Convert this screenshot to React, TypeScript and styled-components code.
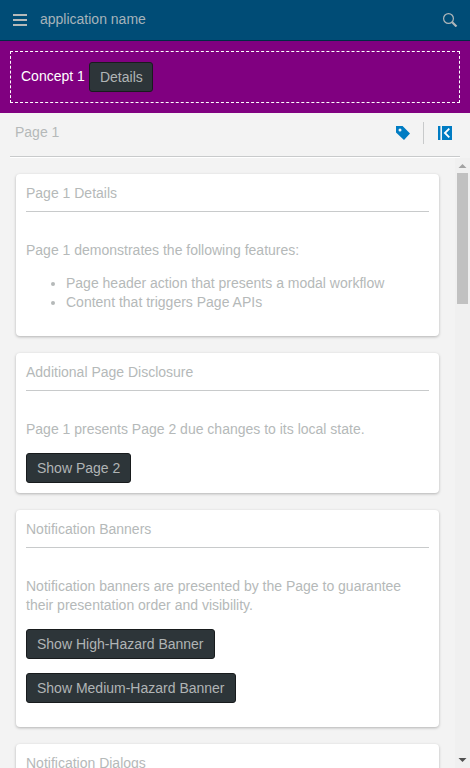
import React from "react";
import styled, { createGlobalStyle } from "styled-components";

const GlobalStyle = createGlobalStyle`
  * { box-sizing: border-box; }
  html, body { margin: 0; height: 100%; overflow: hidden; }
  body {
    font-family: "Liberation Sans", Arial, sans-serif;
    font-size: 14px;
    line-height: 19px;
    color: #b5b9b9;
    background: #f3f3f3;
  }
`;

const Shell = styled.div`
  display: flex;
  flex-direction: column;
  height: 100vh;
  overflow: hidden;
`;

const AppHeader = styled.header`
  display: flex;
  align-items: center;
  flex: 0 0 41px;
  padding: 0 12px 0 13px;
  background: #004c76;
  border-bottom: 1px solid #002b43;
  color: #a6b3ba;
`;

const AppName = styled.div`
  flex: 1;
  margin: 0 0 2px 13px;
`;

const ConceptBanner = styled.section`
  flex: 0 0 72px;
  padding: 10px;
  background: #800080;
`;

const ConceptFrame = styled.div`
  display: flex;
  align-items: flex-start;
  height: 52px;
  padding: 10px;
  gap: 3.89px;
  border: 1px dashed #fff;
  color: #fff;
`;

const ConceptName = styled.span`
  padding-top: 5px;
`;

const Button = styled.button`
  display: block;
  height: 30px;
  padding: 0 10px;
  border: 1px solid #181b1d;
  border-radius: 3px;
  background: #2d3539;
  color: #b0b4b5;
  font: inherit;
  line-height: 28px;
  white-space: nowrap;
`;

const DetailsButton = styled(Button)`
  width: 64.3px;
  padding-right: 9px;
`;

const PageHeader = styled.header`
  display: flex;
  align-items: flex-start;
  flex: 0 0 45px;
  margin: 0 10px;
  padding: 9px 8px 0 5px;
  border-bottom: 1px solid #fff;
  box-shadow: inset 0 -1px 0 #c8cacb;
`;

const PageTitle = styled.div`
  flex: 1;
  padding-top: 1px;
`;

const Actions = styled.div`
  display: flex;
  align-items: center;
  height: 22px;
`;

const ActionDivider = styled.div`
  width: 1px;
  height: 22px;
  margin: 0 14px 0 13px;
  background: #c8cacb;
`;

const PageBody = styled.div`
  display: flex;
  flex: 1;
  min-height: 0;
`;

const CardList = styled.main`
  display: flex;
  flex-direction: column;
  flex: 1;
  gap: 17px;
  padding: 16px 16px 0;
  overflow: hidden;
`;

const Card = styled.section`
  flex: none;
  padding: 10px;
  border-radius: 4px;
  background: #fff;
  box-shadow: 0 1px 3px rgba(0, 0, 0, 0.27);
`;

const CardTitle = styled.div`
  height: 28px;
  margin-bottom: 29px;
  border-bottom: 1px solid #c8cacb;
`;

const Paragraph = styled.p`
  margin: 0 0 14px;
`;

const FeatureList = styled.ul`
  margin: 0 0 14px;
  padding-left: 40px;
`;

const ButtonStack = styled.div<{ $bottom?: number }>`
  display: flex;
  flex-direction: column;
  align-items: flex-start;
  gap: 14px;
  padding-bottom: ${(p) => p.$bottom ?? 0}px;
`;

const ScrollTrack = styled.div`
  display: flex;
  flex-direction: column;
  align-items: center;
  width: 15px;
  background: #f0f0f0;
`;

const ScrollThumb = styled.div`
  width: 11px;
  height: 131px;
  margin-bottom: auto;
  background: #c1c1c1;
`;

const ScrollArrow = styled.svg`
  display: block;
  flex: none;
`;

export default function App() {
  return (
    <>
      <GlobalStyle />
      <Shell>
        <AppHeader>
          <svg width="14" height="12" viewBox="0 0 14 12" fill="#b5b9b9">
            <path d="M0 0h14v2H0zM0 5h14v2H0zM0 10h14v2H0z" />
          </svg>
          <AppName>application name</AppName>
          <svg width="15" height="14" viewBox="0 0 15 14" fill="none" stroke="#b0b7ba">
            <circle cx="5.5" cy="5.5" r="4.9" strokeWidth="1.2" />
            <path d="M9.2 9.2l4.3 4.3" strokeWidth="2.2" />
          </svg>
        </AppHeader>
        <ConceptBanner>
          <ConceptFrame>
            <ConceptName>Concept 1</ConceptName>
            <DetailsButton>Details</DetailsButton>
          </ConceptFrame>
        </ConceptBanner>
        <PageHeader>
          <PageTitle>Page 1</PageTitle>
          <Actions>
            <svg width="14" height="14" viewBox="0 0 14 14" fill="#007cc3">
              <path
                fillRule="evenodd"
                d="M0 0h6.6L14 7.4 8 14 0 6.6zM4 2.5a1.5 1.5 0 1 0 0 3 1.5 1.5 0 0 0 0-3z"
              />
            </svg>
            <ActionDivider />
            <svg width="14" height="14" viewBox="0 0 14 14">
              <path fill="#007cc3" d="M0 0h2.4v14H0zM4 0h10v14H4z" />
              <path d="M11.3 2.6L6.9 7l4.4 4.4" fill="none" stroke="#fff" strokeWidth="1.8" />
            </svg>
          </Actions>
        </PageHeader>
        <PageBody>
          <CardList>
            <Card>
              <CardTitle>Page 1 Details</CardTitle>
              <Paragraph>Page 1 demonstrates the following features:</Paragraph>
              <FeatureList>
                <li>Page header action that presents a modal workflow</li>
                <li>Content that triggers <span>Page</span> <span>APIs</span></li>
              </FeatureList>
            </Card>
            <Card>
              <CardTitle>Additional Page Disclosure</CardTitle>
              <Paragraph>Page 1 presents Page 2 due changes to its local state.</Paragraph>
              <ButtonStack>
                <Button>Show Page 2</Button>
              </ButtonStack>
            </Card>
            <Card>
              <CardTitle>Notification Banners</CardTitle>
              <Paragraph>
                Notification banners are presented by the Page to guarantee their presentation order
                and visibility.
              </Paragraph>
              <ButtonStack $bottom={14}>
                <Button>Show High-Hazard Banner</Button>
                <Button>Show Medium-Hazard Banner</Button>
              </ButtonStack>
            </Card>
            <Card>
              <CardTitle>Notification Dialogs</CardTitle>
            </Card>
          </CardList>
          <ScrollTrack>
            <ScrollArrow width="15" height="15" viewBox="0 0 15 15">
              <path d="M3.5 10h8L7.5 6z" fill="#a3a3a3" />
            </ScrollArrow>
            <ScrollThumb />
            <ScrollArrow width="15" height="15" viewBox="0 0 15 15">
              <path d="M3.5 5h8L7.5 9z" fill="#505050" />
            </ScrollArrow>
          </ScrollTrack>
        </PageBody>
      </Shell>
    </>
  );
}
